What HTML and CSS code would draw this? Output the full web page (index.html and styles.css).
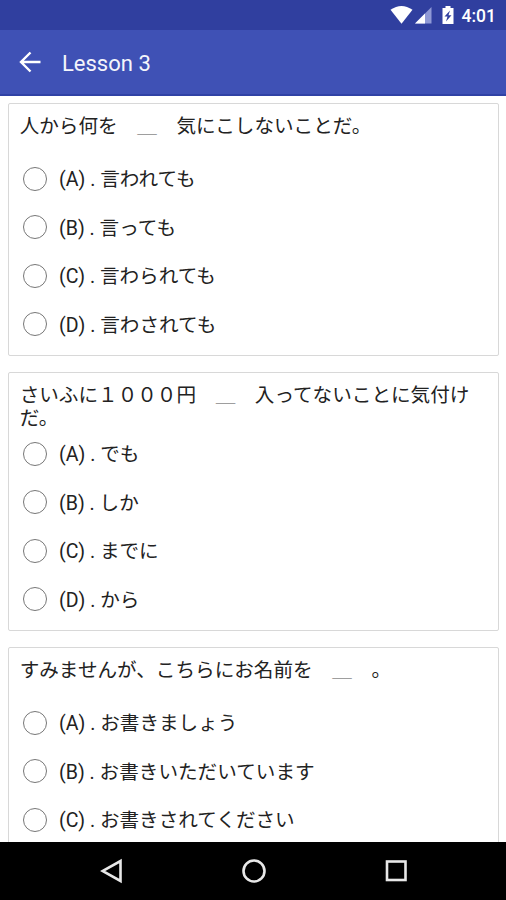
FILE: index.html
```
<!DOCTYPE html>
<html lang="ja">
<head>
<meta charset="utf-8">
<title>Lesson 3</title>
<link rel="stylesheet" href="styles.css">
</head>
<body>
<div class="screen">
  <div class="status">
    <svg class="status-icons" width="68" height="30" viewBox="0 0 68 30">
      <path d="M0.5 9.8Q11.5 2.2 22.500 9.800L11.500 23.800Z" fill="#fff"/>
      <path d="M41.500 7V23.500H25Z" fill="#8f99d6"/>
      <path d="M35 13.500V23.500H25Z" fill="#fff"/>
      <path d="M55.500 6H60.500V8H63.500V24H52.500V8H55.500Z" fill="#fff"/>
      <path d="M60 10.500L54.500 16.500H57.500L56 21.500L61.500 15.200H58.500Z" fill="#303f9f"/>
    </svg>
    <span class="clock">4:01</span>
  </div>
  <header class="toolbar">
    <svg class="back" width="22" height="22" viewBox="0 0 22 22" fill="none" stroke="#fff" stroke-width="2.400"><path d="M21.500 11H2.500M11.500 1.500L2 11L11.500 20.500"/></svg>
    <h1 class="title">Lesson 3</h1>
  </header>
  <main class="list">
    <section class="card">
      <p class="question">人から何を　<span class="blank">＿</span>　気にこしないことだ。</p>
      <ul class="options">
        <li class="option"><span class="radio"></span><span class="label">(A) . 言われても</span></li>
        <li class="option"><span class="radio"></span><span class="label">(B) . 言っても</span></li>
        <li class="option"><span class="radio"></span><span class="label">(C) . 言わられても</span></li>
        <li class="option"><span class="radio"></span><span class="label">(D) . 言わされても</span></li>
      </ul>
    </section>
    <section class="card">
      <p class="question">さいふに１０００円　<span class="blank">＿</span>　入ってないことに気付けだ。</p>
      <ul class="options">
        <li class="option"><span class="radio"></span><span class="label">(A) . でも</span></li>
        <li class="option"><span class="radio"></span><span class="label">(B) . しか</span></li>
        <li class="option"><span class="radio"></span><span class="label">(C) . までに</span></li>
        <li class="option"><span class="radio"></span><span class="label">(D) . から</span></li>
      </ul>
    </section>
    <section class="card">
      <p class="question">すみませんが、こちらにお名前を　<span class="blank">＿</span>　。</p>
      <ul class="options">
        <li class="option"><span class="radio"></span><span class="label">(A) . お書きましょう</span></li>
        <li class="option"><span class="radio"></span><span class="label">(B) . お書きいただいています</span></li>
        <li class="option"><span class="radio"></span><span class="label">(C) . お書きされてください</span></li>
      </ul>
    </section>
  </main>
  <nav class="navbar">
    <svg width="24" height="26" viewBox="0 0 24 26"><path d="M20.500 3V23L2.500 13Z"/></svg>
    <svg width="26" height="26" viewBox="0 0 26 26"><circle cx="13" cy="13" r="10.500"/></svg>
    <svg width="24" height="26" viewBox="0 0 24 26"><rect x="3" y="3.500" width="18.500" height="18.500"/></svg>
  </nav>
</div>
</body>
</html>
```
FILE: styles.css
```
* {
  box-sizing: border-box;
}

body {
  margin: 0;
  font-family: Roboto, "Noto Sans CJK JP", sans-serif;
  background: #fff;
}

.screen {
  display: flex;
  flex-direction: column;
  width: 506px;
  height: 900px;
  overflow: hidden;
}

.status {
  display: flex;
  flex: none;
  justify-content: flex-end;
  align-items: center;
  gap: 4px;
  height: 30px;
  padding-right: 10px;
  background: #303f9f;
}

.clock {
  padding-top: 2px;
  color: #fff;
  font-size: 17.500px;
  font-weight: 500;
  line-height: 30px;
}

.toolbar {
  display: flex;
  flex: none;
  align-items: center;
  gap: 21px;
  height: 66px;
  padding: 0 0 1px 19px;
  background: #3f51b5;
  border-bottom: 2px solid #3042a5;
}

.title {
  margin: 0;
  padding-top: 3px;
  color: #f4f5fb;
  font-size: 22px;
  font-weight: 400;
}

.list {
  display: flex;
  flex: 1;
  flex-direction: column;
  gap: 16px;
  min-height: 0;
  padding: 7px 7px 0 8px;
  overflow: hidden;
}

.card {
  flex: none;
  padding: 0 10px 6.500px;
  border: 1px solid #d8d8d8;
  border-radius: 2px;
}

.question {
  min-height: 50.500px;
  margin: 0;
  padding: 10.600px 0 0 0.700px;
  color: #222;
  font-size: 19.600px;
  line-height: 23px;
}

.blank {
  color: #888;
}

.options {
  margin: 0;
  padding: 0;
  list-style: none;
}

.option {
  display: flex;
  align-items: center;
  height: 48.500px;
  padding-left: 4px;
  color: #222;
  font-size: 19.600px;
  line-height: 24px;
  white-space: pre;
}

.label {
  padding-top: 3px;
}

.radio {
  width: 24px;
  height: 24px;
  margin-right: 12px;
  border: 1.500px solid #777;
  border-radius: 50%;
}

.navbar {
  display: flex;
  flex: none;
  justify-content: space-between;
  align-items: center;
  height: 58px;
  padding: 0 98px 0 100px;
  background: #000;
}

.navbar svg {
  fill: none;
  stroke: #e8e8e8;
  stroke-width: 2.600;
}
```
